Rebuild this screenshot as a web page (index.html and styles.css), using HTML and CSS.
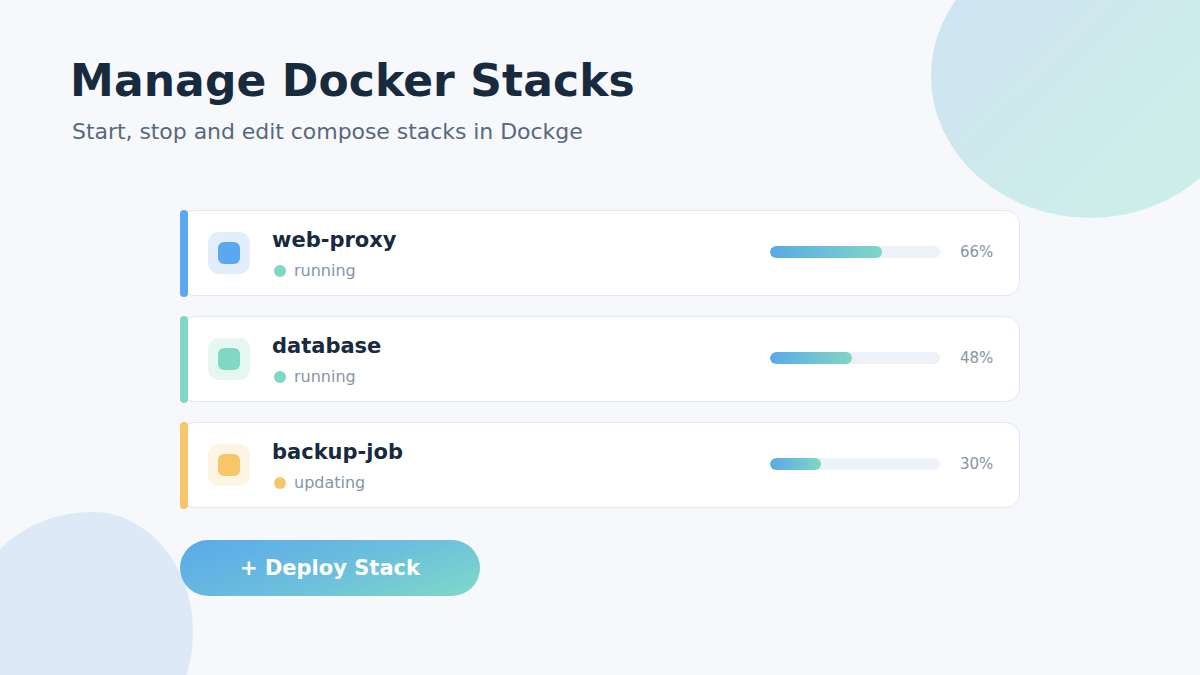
FILE: index.html
```html
<!DOCTYPE html>
<html lang="en">
<head>
    <meta charset="UTF-8">
    <meta name="viewport" content="width=device-width, initial-scale=1.0">
    <title>Dockge - Stacks</title>
    <link rel="stylesheet" href="styles.css">
</head>
<body>

    <div class="blob blob-top"></div>
    <div class="blob blob-bottom"></div>

    <main class="page">
        <header class="page-header">
            <h1 class="title">Manage Docker Stacks</h1>
            <p class="subtitle">Start, stop and edit compose stacks in Dockge</p>
        </header>

        <section class="stack-list">
            <div class="stack-card blue">
                <div class="stack-icon"><span></span></div>
                <div class="stack-info">
                    <div class="stack-name">web-proxy</div>
                    <div class="stack-status"><i class="dot running"></i>running</div>
                </div>
                <div class="progress"><div class="progress-fill" style="width: 66%"></div></div>
                <span class="percent">66%</span>
            </div>

            <div class="stack-card green">
                <div class="stack-icon"><span></span></div>
                <div class="stack-info">
                    <div class="stack-name">database</div>
                    <div class="stack-status"><i class="dot running"></i>running</div>
                </div>
                <div class="progress"><div class="progress-fill" style="width: 48%"></div></div>
                <span class="percent">48%</span>
            </div>

            <div class="stack-card yellow">
                <div class="stack-icon"><span></span></div>
                <div class="stack-info">
                    <div class="stack-name">backup-job</div>
                    <div class="stack-status"><i class="dot updating"></i>updating</div>
                </div>
                <div class="progress"><div class="progress-fill" style="width: 30%"></div></div>
                <span class="percent">30%</span>
            </div>

            <button class="deploy-btn">+ Deploy Stack</button>
        </section>
    </main>

</body>
</html>
```

FILE: styles.css
```css
:root {
    --text-dark: #172a3e;
    --text-sub: #56697f;
    --text-light: #8595a8;
    --blue: #5aa9f0;
    --green: #7fd8c4;
    --yellow: #f5c76a;
    --border: #e2e8f0;
}

* {
    margin: 0;
    padding: 0;
    box-sizing: border-box;
}

html {
    overflow: hidden;
}

body {
    font-family: 'DejaVu Sans', 'Noto Sans', sans-serif;
    background-color: #f6f8fc;
    color: var(--text-dark);
    width: 1200px;
    height: 675px;
    overflow: hidden;
    position: relative;
}

/* --- decorative blobs --- */
.blob {
    position: absolute;
    z-index: 0;
}
.blob-top {
    left: 931px;
    top: -55px;
    width: 320px;
    height: 273px;
    border-radius: 42% 58% 50% 50% / 48% 45% 55% 52%;
    background: linear-gradient(135deg, #cfe2f3 0%, #cdebeb 60%, #ccefe6 100%);
}
.blob-bottom {
    left: -30px;
    top: 512px;
    width: 223px;
    height: 240px;
    border-radius: 55% 45% 45% 55% / 45% 50% 50% 55%;
    background-color: #dde9f6;
}

/* --- layout --- */
.page {
    position: relative;
    z-index: 1;
    padding: 54px 70px 0;
}

.title {
    font-size: 44px;
    font-weight: 700;
    line-height: 54px;
    letter-spacing: 0.1px;
}
.subtitle {
    font-size: 22px;
    color: var(--text-sub);
    margin-top: 11px;
    margin-left: 2px;
    line-height: 26px;
    letter-spacing: -0.05px;
}

.stack-list {
    width: 840px;
    margin: 65px 0 0 110px;
    display: flex;
    flex-direction: column;
    gap: 20px;
}

/* --- stack card --- */
.stack-card {
    position: relative;
    height: 86px;
    background: #fff;
    border: 1.5px solid var(--border);
    border-radius: 14px;
    display: flex;
    align-items: center;
    padding: 0 25px 0 27px;
}
.stack-card::before {
    content: '';
    position: absolute;
    left: -1.5px;
    top: -1.5px;
    bottom: -1.5px;
    width: 8px;
    border-radius: 4px;
    background: var(--accent);
}
.stack-card.blue { --accent: var(--blue); --soft: #e3eefb; }
.stack-card.green { --accent: var(--green); --soft: #e6f7f2; }
.stack-card.yellow { --accent: var(--yellow); --soft: #fdf4e3; }

.stack-icon {
    width: 42px;
    height: 42px;
    border-radius: 11px;
    background: var(--soft);
    display: flex;
    align-items: center;
    justify-content: center;
    flex-shrink: 0;
}
.stack-icon span {
    width: 22px;
    height: 22px;
    border-radius: 6px;
    background: var(--accent);
}

.stack-info {
    margin-left: 22px;
    flex: 1;
    padding-top: 3px;
}
.stack-name {
    font-size: 21px;
    font-weight: 700;
    line-height: 25px;
}
.stack-status {
    font-size: 16px;
    color: var(--text-light);
    line-height: 20px;
    margin-top: 8px;
    display: flex;
    align-items: center;
    margin-left: 2px;
}
.dot {
    width: 12px;
    height: 12px;
    border-radius: 50%;
    margin-right: 8px;
}
.dot.running { background: var(--green); }
.dot.updating { background: var(--yellow); }

.progress {
    width: 170px;
    height: 12px;
    border-radius: 6px;
    background: #edf2f9;
    overflow: hidden;
    margin-top: -2px;
}
.progress-fill {
    height: 100%;
    border-radius: 6px;
    background: linear-gradient(90deg, #5aa9e8, #7fd6c6);
}
.percent {
    width: 34px;
    margin-left: 20px;
    font-size: 15px;
    color: var(--text-light);
    margin-top: -2px;
}

/* --- deploy button --- */
.deploy-btn {
    margin-top: 12px;
    width: 300px;
    height: 56px;
    border: none;
    border-radius: 28px;
    background: linear-gradient(160deg, #5aa9ea 0%, #6cc0dc 55%, #80d9c8 100%);
    color: #fff;
    font-family: inherit;
    font-size: 21px;
    font-weight: 700;
    cursor: pointer;
}
```
